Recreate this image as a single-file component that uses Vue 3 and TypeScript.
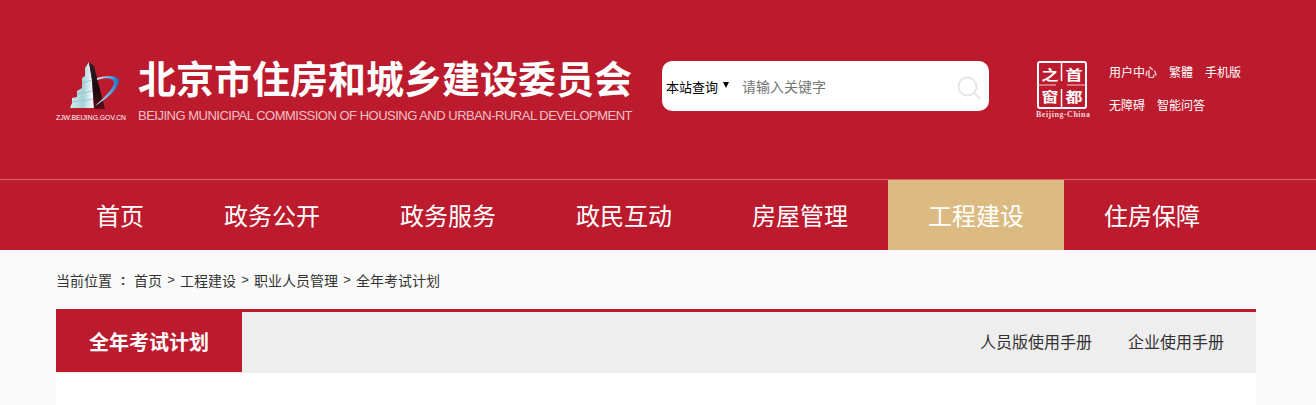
<template>
  <div class="page">
    <header class="top">
      <div class="top-row">
        <svg class="logo" width="82" height="70" viewBox="56 55 82 70">
          <defs>
            <linearGradient id="glass" x1="0" y1="0" x2="1" y2="0">
              <stop offset="0" stop-color="#cfe8eb" />
              <stop offset="0.55" stop-color="#a5d2d8" />
              <stop offset="1" stop-color="#ffffff" />
            </linearGradient>
            <linearGradient id="dark" x1="0" y1="0" x2="0" y2="1">
              <stop offset="0" stop-color="#2c2226" />
              <stop offset="0.6" stop-color="#1a0a0e" />
              <stop offset="1" stop-color="#5a0c18" />
            </linearGradient>
            <linearGradient id="swoosh" x1="0" y1="0" x2="1" y2="0">
              <stop offset="0" stop-color="#eef4f8" />
              <stop offset="0.7" stop-color="#4a9fe0" />
              <stop offset="1" stop-color="#1f66b8" />
            </linearGradient>
          </defs>
          <path d="M89 62 L85 68 L85 76 L82 78 L82 88 L77 91 L77 97 L72 98 L72 103 L70 108 L94 108 L92 80 Z" fill="url(#glass)" />
          <path d="M82 83 L92 80 M77 94 L93 91 M72 102 L94 99" stroke="#8fbcc4" stroke-width="0.7" fill="none" />
          <path d="M89 62 L94 66 L105 109 L94 109 L92 80 Z" fill="url(#dark)" />
          <path d="M97 78 C106 75 117 75 119 80 C120 86 110 97 95 106 C105 97 115 87 114 82 C113 78 106 77 97 80 Z" fill="url(#swoosh)" />
          <text class="logo-url" x="56" y="120" textLength="70" lengthAdjust="spacingAndGlyphs">ZJW.BEIJING.GOV.CN</text>
        </svg>

        <div class="brand">
          <div class="brand-cn">北京市住房和城乡建设委员会</div>
          <div class="brand-en">BEIJING MUNICIPAL COMMISSION OF HOUSING AND URBAN-RURAL DEVELOPMENT</div>
        </div>

        <div class="search">
          <span class="scope">本站查询</span>
          <span class="caret"></span>
          <span class="hint">请输入关键字</span>
          <svg class="search-icon" width="24" height="24" viewBox="0 0 24 24">
            <circle cx="10.5" cy="10.5" r="9" fill="none" stroke="#e6e6e6" stroke-width="2" />
            <path d="M17 17 L22.5 22" stroke="#e6e6e6" stroke-width="2" stroke-linecap="round" />
          </svg>
        </div>

        <svg class="seal" width="54" height="60" viewBox="0 0 54 60">
          <rect x="2" y="1" width="48" height="46" rx="2" fill="none" stroke="#fff" stroke-width="2" />
          <path d="M25.5 1 V20 M25.5 28 V47" stroke="#fff" stroke-width="1.5" />
          <path d="M2 24 H20 M31 24 H50" stroke="#f2c9ce" stroke-width="1" />
          <text class="seal-zh" text-anchor="middle" transform="translate(14 19) scale(1 0.8)">之</text>
          <text class="seal-zh" text-anchor="middle" transform="translate(38 19) scale(1 0.8)">首</text>
          <text class="seal-zh" text-anchor="middle" transform="translate(14 41) scale(1 0.8)">窗</text>
          <text class="seal-zh" text-anchor="middle" transform="translate(38 41) scale(1 0.8)">都</text>
          <text class="seal-en" x="0" y="56" textLength="54">Beijing-China</text>
        </svg>

        <div class="quick">
          <div v-for="(row, i) in quickLinks" :key="i" class="quick-row">
            <span v-for="link in row" :key="link">{{ link }}</span>
          </div>
        </div>
      </div>
    </header>

    <nav class="nav">
      <a
        v-for="item in navItems"
        :key="item"
        :class="['nav-item', { active: item === currentNav }]"
      >{{ item }}</a>
    </nav>

    <div class="crumbs">
      <span class="crumb-label">当前位置</span>
      <span class="crumb-colon">:</span>
      <template v-for="(c, i) in crumbs" :key="c">
        <span v-if="i > 0" class="crumb-sep">&gt;</span>
        <span>{{ c }}</span>
      </template>
    </div>

    <section class="panel">
      <div class="panel-head">
        <h2 class="panel-title">全年考试计划</h2>
        <div class="panel-links">
          <a v-for="m in manuals" :key="m">{{ m }}</a>
        </div>
      </div>
      <div class="panel-body"></div>
    </section>
  </div>
</template>

<script setup lang="ts">
const navItems = ['首页', '政务公开', '政务服务', '政民互动', '房屋管理', '工程建设', '住房保障']
const currentNav = '工程建设'
const crumbs = ['首页', '工程建设', '职业人员管理', '全年考试计划']
const manuals = ['人员版使用手册', '企业使用手册']
const quickLinks = [
  ['用户中心', '繁體', '手机版'],
  ['无障碍', '智能问答'],
]
</script>

<style>
body {
  background: #fafafa;
}
</style>

<style scoped>
.page {
  font-family: "Liberation Sans", "Noto Sans CJK SC", sans-serif;
  color: #333;
}

.top {
  height: 179px;
  background: #bc1b2e;
  border-bottom: 1px solid #d9606d;
}

.top-row {
  display: flex;
  align-items: flex-start;
  padding: 55px 0 0 56px;
}

.logo {
  flex: none;
}

.logo-url {
  font-family: "Liberation Sans", sans-serif;
  font-size: 8px;
  fill: #fff;
}

.brand {
  width: 494px;
  flex: none;
  color: #fff;
}

.brand-cn {
  font-size: 38px;
  font-weight: 700;
  line-height: 50px;
  white-space: nowrap;
}

.brand-en {
  font-size: 13px;
  line-height: 20px;
  margin-top: 1px;
  color: #f0c0c5;
  letter-spacing: -0.5px;
  white-space: nowrap;
}

.search {
  flex: none;
  position: relative;
  display: flex;
  align-items: center;
  width: 327px;
  height: 50px;
  margin: 6px 0 0 30px;
  background: #fff;
  border-radius: 10px;
  padding-left: 4px;
  box-sizing: border-box;
  font-size: 13px;
}

.scope {
  color: #000;
}

.caret {
  width: 0;
  height: 0;
  margin: -2px 0 0 5px;
  border-left: 3.5px solid transparent;
  border-right: 3.5px solid transparent;
  border-top: 6px solid #000;
}

.hint {
  margin-left: 13px;
  font-size: 14px;
  color: #757575;
}

.search-icon {
  margin-left: auto;
  margin-right: 8px;
  margin-top: 3px;
}

.seal {
  flex: none;
  margin: 6px 0 0 47px;
}

.seal-zh {
  font-size: 17px;
  font-weight: 700;
  fill: #fff;
}

.seal-en {
  font-family: "Liberation Serif", serif;
  font-size: 8px;
  font-weight: 700;
  fill: #f2d5d8;
}

.quick {
  margin: 0 0 0 19px;
  padding-top: 2px;
  font-size: 12px;
  color: #fff;
}

.quick-row {
  display: flex;
  gap: 12px;
  height: 33px;
  line-height: 33px;
}

.nav {
  display: flex;
  height: 70px;
  padding-left: 56px;
  background: #bc1b2e;
}

.nav-item {
  height: 70px;
  padding: 0 40px;
  font-size: 24px;
  line-height: 74px;
  color: #fff;
}

.nav-item.active {
  background: #dbbb82;
}

.crumbs {
  display: flex;
  align-items: center;
  height: 59px;
  padding: 0 0 0 56px;
  font-size: 14px;
  color: #333;
}

.crumb-colon {
  width: 22px;
  text-align: center;
  font-weight: 700;
}

.crumb-sep {
  width: 18px;
  text-align: center;
  font-size: 13px;
}

.panel {
  width: 1200px;
  margin-left: 56px;
  background: #fff;
}

.panel-head {
  display: flex;
  justify-content: space-between;
  height: 61px;
  background: #eee;
  border-top: 3px solid #bc1b2e;
}

.panel-title {
  width: 186px;
  height: 60px;
  margin: 0;
  background: #bc1b2e;
  color: #fff;
  font-size: 20px;
  font-weight: 700;
  line-height: 62px;
  text-align: center;
}

.panel-links {
  display: flex;
  gap: 36px;
  padding-right: 32px;
  font-size: 16px;
  line-height: 62px;
  color: #333;
}

.panel-body {
  height: 32px;
}
</style>
